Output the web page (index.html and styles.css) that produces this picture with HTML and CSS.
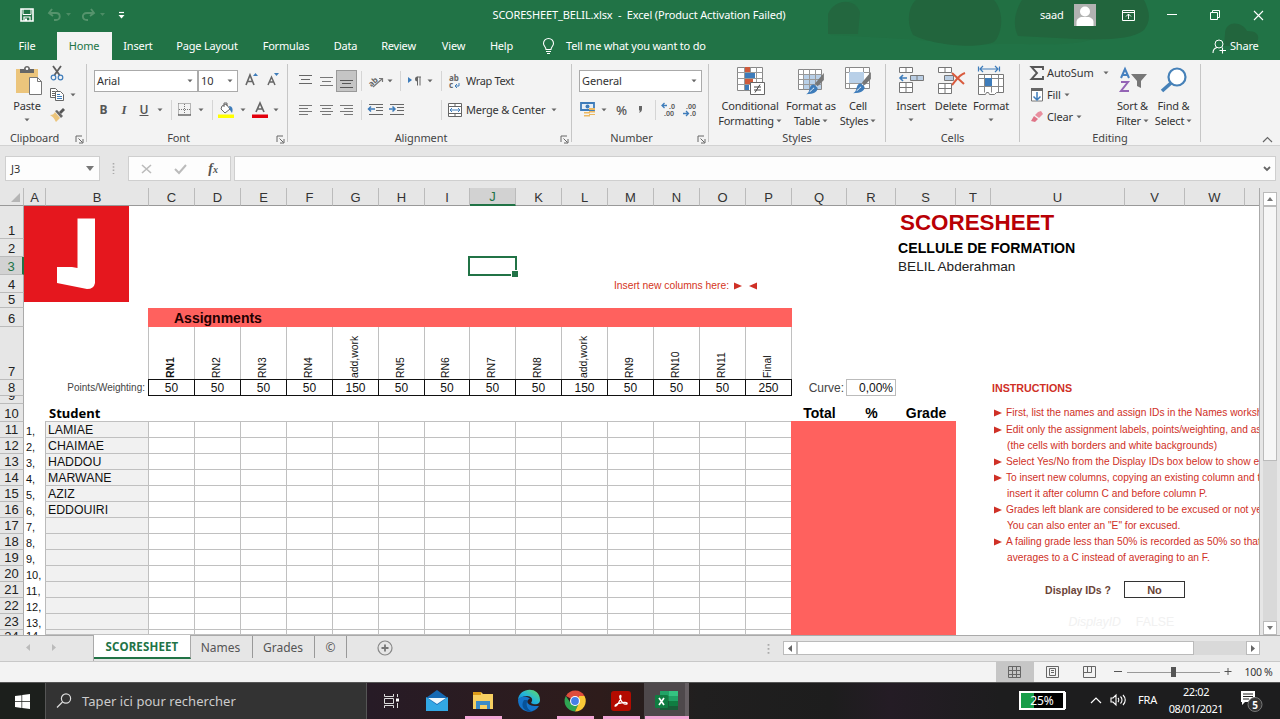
FILE: index.html
```html
<!DOCTYPE html>
<html lang="en">
<head>
<meta charset="utf-8">
<title>SCORESHEET_BELIL.xlsx - Excel</title>
<link rel="stylesheet" href="styles.css">
</head>
<body>
<svg class="defs" width="0" height="0">
  <symbol id="caret" viewBox="0 0 6 4"><path d="M.5 .5h5L3 3.3z" fill="#666"/></symbol>
  <symbol id="launch" viewBox="0 0 9 9"><path d="M1 7V1h6M3.500 3.500l4 4M8 4v4H4" fill="none" stroke="#666"/></symbol>
  <symbol id="brush" viewBox="0 0 22 26"><path d="M21 0v8l-7 7-3-3z" fill="#777"/><path d="M10 13l4 4c0 4-4 7-13 7 4-2 3-5 5-9 1-2 3-2 4-2z" fill="#3e7cba"/><path d="M5 21c3-1 3-4 5-4" stroke="#fff" fill="none"/></symbol>
</svg>
<div class="app">
  <header class="titlebar">
    <svg class="cloud" width="460" height="60" viewBox="0 0 460 60"><path d="M10 35C2 15 18 2 36 0h250c12 22 0 38-24 42-36 5-60 0-108 3-20-3-80-7-144-10z" fill="#217043"/><path d="M93 35C85 20 90 5 96 0h78c12 14 7 36 0 42-20 8-64 2-81-7zM198 36c-7-14-1-28 4-36h122c8 16 5 23 0 30-18 15-76 8-126 6zM405 34c0-14 17-13 22-3 15 0 12 9 8 15h-31z" fill="#22653d"/><path d="M8 14C15-2 35-2 40 12L38 34H8z" fill="#23673f"/></svg>
    <div class="quick">
      <svg width="14" height="14" viewBox="0 0 14 14"><path d="M1 1h12v12H1z" fill="none" stroke="#fff" stroke-width="1.600"/><path d="M3 1v5.500h8V1" fill="none" stroke="#fff" stroke-width="1"/><path d="M4 13V9h6v4" fill="none" stroke="#fff" stroke-width="1.200"/><path d="M5 10.500h2V13H5z" fill="#fff"/></svg>
      <svg width="26" height="14" viewBox="0 0 26 14"><path d="M5 1L2 5l4 3M2 5h7c5 0 5 7 0 7H7" fill="none" stroke="#55936c" stroke-width="1.900"/><path d="M19 5h5l-2.500 3z" fill="#4b8c64"/></svg>
      <svg width="26" height="14" viewBox="0 0 26 14"><path d="M10 1l3 4-4 3M13 5H6C0 5 1 12 6 12h1" fill="none" stroke="#55936c" stroke-width="1.900"/><path d="M19 5h5l-2.500 3z" fill="#4b8c64"/></svg>
      <svg width="7" height="8" viewBox="0 0 7 8"><path d="M1 1.500h5" stroke="#fff" stroke-width="1.200"/><path d="M.5 4h6l-3 3.500z" fill="#fff"/></svg>
    </div>
    <div class="doc-title">SCORESHEET_BELIL.xlsx&nbsp; -&nbsp; Excel (Product Activation Failed)</div>
    <div class="account">
      <span class="user">saad</span>
      <svg width="22" height="22" viewBox="0 0 22 22"><path d="M0 0h22v22H0z" fill="#b1b2b1"/><circle cx="11" cy="7.500" r="5" fill="#fff"/><path d="M2.500 22v-4c0-3 3-5 6-5h5c3 0 6 2 6 5v4z" fill="#fff"/></svg>
      <svg width="13" height="11" viewBox="0 0 13 11"><path d="M.5 .5h12v10H.5zM.5 2.500h12M6.500 9V4M4 6.500L6.500 4 9 6.500" fill="none" stroke="#fff"/></svg>
      <svg width="10" height="11" viewBox="0 0 10 11"><path d="M0 4.500h10" stroke="#fff"/></svg>
      <svg width="10" height="10" viewBox="0 0 10 10"><path d="M.5 2.500h7v7h-7zM2.500 2V.5h7v7H8" fill="none" stroke="#fff"/></svg>
      <svg width="11" height="11" viewBox="0 0 11 11"><path d="M1 1l9 9M10 1l-9 9" stroke="#fff" stroke-width="1.100"/></svg>
    </div>
  </header>
  <nav class="tabs">
    <span>File</span><span class="active">Home</span><span>Insert</span><span>Page Layout</span><span>Formulas</span><span>Data</span><span>Review</span><span>View</span><span>Help</span>
    <svg width="13" height="17" viewBox="0 0 13 17"><path d="M4 11.500C4 9 1.500 8 1.500 5.500a5 5 0 0 1 10 0C11.500 8 9 9 9 11.500zM4 13.500h5M5 15.500h3" fill="none" stroke="#fff" stroke-width="1.100"/></svg>
    <span class="tell">Tell me what you want to do</span>
    <div class="share"><svg width="14" height="15" viewBox="0 0 14 15"><circle cx="7" cy="5" r="4" fill="none" stroke="#fff"/><path d="M1 14c0-3 2-5 4-5.500M7.500 11.500H14M10.500 8.500v6" fill="none" stroke="#fff" stroke-width="1.100"/></svg><span>Share</span></div>
  </nav>
  <section class="ribbon">
    <div class="group clipboard">
      <div class="body">
        <div class="big paste">
          <svg width="28" height="30" viewBox="0 0 28 30"><path d="M1 3h22v24H1z" fill="#ecc57c"/><path d="M5 3h4c0-4 6-4 6 0h4v4H5z" fill="#666"/><circle cx="12" cy="2.800" r="1.300" fill="#fff"/><path d="M14.500 11.500h8l4 4v13h-12z" fill="#fff" stroke="#777"/><path d="M22.500 11.500v4h4" fill="none" stroke="#777"/></svg>
          <b>Paste</b><svg class="c"><use href="#caret"/></svg>
        </div>
        <div class="clips">
          <svg width="14" height="15" viewBox="0 0 14 15"><path d="M3 0l6.500 9M11 0L4.500 9" stroke="#5c5c5c" stroke-width="1.800"/><circle cx="3.500" cy="11.500" r="2.300" fill="none" stroke="#3e7cba" stroke-width="1.200"/><circle cx="10.500" cy="11.500" r="2.300" fill="none" stroke="#3e7cba" stroke-width="1.200"/></svg>
          <div class="pair"><svg width="14" height="13" viewBox="0 0 14 13"><path d="M.5 .5h5l2 2v7h-7zM2 3.500h3M2 5.500h3M2 7.500h3" fill="#fff" stroke="#666"/><path d="M5.500 3.500h5l3 3v6h-8z" fill="#fff" stroke="#666"/><path d="M7 6.500h3M7 8.500h5M7 10.500h5" stroke="#3e7cba"/></svg><svg class="c"><use href="#caret"/></svg></div>
          <svg width="15" height="14" viewBox="0 0 15 14"><path d="M13 0l2 2-4 4-2-2z" fill="#555"/><path d="M5 3l2-1 6 6-2 2z" fill="#666"/><path d="M5 4l5 6-4 4C4 10 3 9 0 7c3 0 4-1 5-3z" fill="#ecc57c"/></svg>
        </div>
      </div>
      <div class="label"><span>Clipboard</span><svg><use href="#launch"/></svg></div>
    </div>
    <div class="group font">
      <div class="body">
        <div class="row combos"><div class="combo"><span>Arial</span><svg class="c"><use href="#caret"/></svg></div><div class="combo"><span>10</span><svg class="c"><use href="#caret"/></svg></div>
          <svg class="grow" width="13" height="13" viewBox="0 0 13 13"><path d="M1 12L5 2l4 10M2.500 8.500h5" fill="none" stroke="#666" stroke-width="1.600"/><path d="M8 3l2.500-3L13 3z" fill="#3e7cba"/></svg>
          <svg class="shrink" width="13" height="13" viewBox="0 0 13 13"><path d="M1 12l3.500-8L8 12M2.500 9h4.500" fill="none" stroke="#666" stroke-width="1.500"/><path d="M7 0h5L9.500 3z" fill="#3e7cba"/></svg></div>
        <div class="row format">
          <b class="bold">B</b><i class="ital">I</i><u class="under">U</u><svg class="c"><use href="#caret"/></svg><hr>
          <svg width="13" height="13" viewBox="0 0 13 13"><path d="M.5 .5h12v11M.5 .5v11M6.500 1v10M1 6.500h11" fill="none" stroke="#777" stroke-dasharray="1 1"/><path d="M0 12h13" stroke="#555" stroke-width="1.300"/></svg><svg class="c"><use href="#caret"/></svg><hr>
          <svg width="16" height="16" viewBox="0 0 16 16"><path d="M4 4l4-2 4 5-5 4-4-4zM6 5V1h3v3" fill="#fff" stroke="#666"/><path d="M11 4c4 0 4 4 3 7l-2-3z" fill="#3e7cba"/><path d="M0 12.500h16V16H0z" fill="#ffff00"/></svg><svg class="c"><use href="#caret"/></svg>
          <svg width="16" height="16" viewBox="0 0 16 16"><path d="M4 10L8 1l4 9M5.500 7h5" fill="none" stroke="#666" stroke-width="1.700"/><path d="M0 12.500h16V16H0z" fill="#e3000b"/></svg><svg class="c"><use href="#caret"/></svg>
        </div>
      </div>
      <div class="label"><span>Font</span><svg><use href="#launch"/></svg></div>
    </div>
    <div class="group align">
      <div class="body">
        <div class="row align-a">
          <svg width="13" height="13" viewBox="0 0 13 13"><path d="M0 .5h13M2 4.500h9M0 8.500h13" stroke="#666"/></svg>
          <svg width="13" height="13" viewBox="0 0 13 13"><path d="M0 2.500h13M2 6.500h9M0 10.500h13" stroke="#777"/></svg>
          <span class="pressed"><svg width="13" height="13" viewBox="0 0 13 13"><path d="M0 5.500h13M2 8.500h9M0 12.500h13" stroke="#555"/></svg></span><hr>
          <svg width="16" height="14" viewBox="0 0 16 14"><g transform="rotate(-42 7 7)"><text x="0" y="9" class="glyph">ab</text></g><path d="M5 13l9-8M11 4.500h3.500V8" fill="none" stroke="#777" stroke-width="1.200"/></svg><svg class="c"><use href="#caret"/></svg><hr>
          <svg width="14" height="10" viewBox="0 0 14 10"><path d="M0 1l4 3-4 3z" fill="#3e7cba"/><path d="M9 1H13M9.500 1v8.500M12 1v8.500" stroke="#666" fill="none"/><path d="M9.500 .5a2.500 2.500 0 0 0 0 5z" fill="#666"/></svg><svg class="c"><use href="#caret"/></svg><hr>
          <svg width="12" height="15" viewBox="0 0 12 15"><text x="0" y="7" class="glyph">ab</text><text x="0" y="14" class="glyph">c</text><path d="M10 9v3H6M8 10l-2 2 2 2" fill="none" stroke="#3e7cba"/></svg><span class="txt wrap">Wrap Text</span>
        </div>
        <div class="row align-b">
          <svg width="13" height="11" viewBox="0 0 13 11"><path d="M0 1.500h13M0 4.500h9M0 7.500h13M0 10.500h9" stroke="#777"/></svg>
          <svg width="13" height="11" viewBox="0 0 13 11"><path d="M0 1.500h13M2 4.500h9M0 7.500h13M2 10.500h9" stroke="#777"/></svg>
          <svg width="13" height="11" viewBox="0 0 13 11"><path d="M0 1.500h13M4 4.500h9M0 7.500h13M4 10.500h9" stroke="#777"/></svg><hr>
          <svg width="15" height="12" viewBox="0 0 15 12"><path d="M1 .5h14M8 3.500h7M8 6.500h7M1 10.500h14" stroke="#666"/><path d="M0 5h7M3 2.500L.5 5 3 7.500" fill="none" stroke="#3e7cba" stroke-width="1.500"/></svg>
          <svg width="15" height="12" viewBox="0 0 15 12"><path d="M1 .5h14M8 3.500h7M8 6.500h7M1 10.500h14" stroke="#666"/><path d="M0 5h6M3.500 2.500L6 5 3.500 7.500" fill="none" stroke="#3e7cba" stroke-width="1.500"/></svg><i></i><hr>
          <svg width="14" height="14" viewBox="0 0 14 14"><path d="M.5 .5h13v13H.5zM.5 3.500h13M.5 10.500h13M7 .5v3M7 10.500v3" fill="#fff" stroke="#666"/><path d="M2 7h10M4 5L2 7l2 2M10 5l2 2-2 2" fill="none" stroke="#3e7cba"/></svg><span class="txt merge">Merge &amp; Center</span><svg class="c"><use href="#caret"/></svg>
        </div>
      </div>
      <div class="label"><span>Alignment</span><svg><use href="#launch"/></svg></div>
    </div>
    <div class="group number">
      <div class="body">
        <div class="row"><div class="combo"><span>General</span><svg class="c"><use href="#caret"/></svg></div></div>
        <div class="row number-b">
          <svg width="16" height="15" viewBox="0 0 16 15"><path d="M1 1h13v7H1z" fill="#e7eff7" stroke="#3e7cba" stroke-width="1.800"/><circle cx="7.500" cy="4.500" r="2" fill="#3e7cba"/><path d="M9 6h6v2H9zM9 9h6v1.500H9zM4 10h6v1.500H4zM4 13h6v1.500H4zM9 12h6v1H9z" fill="#ecb962"/></svg><svg class="c"><use href="#caret"/></svg>
          <b class="pct">%</b><svg width="5" height="8" viewBox="0 0 5 8"><path d="M1 0h3v3c0 2-1 3-3 4 1-2 1-2 0-3z" fill="#666"/></svg><hr>
          <svg width="15" height="15" viewBox="0 0 15 15"><path d="M0 3.500h5M2.500 1L0 3.500 2.500 6" fill="none" stroke="#3e7cba" stroke-width="1.300"/><text x="7" y="7" class="num">.0</text><text x="2" y="14" class="num">.00</text></svg>
          <svg width="15" height="15" viewBox="0 0 15 15"><path d="M0 11.500h5M3 9l2.500 2.500L3 14" fill="none" stroke="#3e7cba" stroke-width="1.300"/><text x="3" y="7" class="num">.00</text><text x="7" y="14" class="num">.0</text></svg>
        </div>
      </div>
      <div class="label"><span>Number</span><svg><use href="#launch"/></svg></div>
    </div>
    <div class="group styles">
      <div class="body">
        <div class="big"><svg width="30" height="30" viewBox="0 0 30 30"><path d="M2.500 1.500h25v23h-25z" fill="#fff" stroke="#888"/><path d="M10 1h5v5h-5zM10 13h8v5h-8z" fill="#cf5b3c"/><path d="M10 7h10v5H10zM10 19h4v5h-4z" fill="#3e7cba"/><path d="M2.500 6.500h25M2.500 12.500h25M2.500 18.500h25M9.500 1.500v23M15.500 1.500v5M21.500 1.500v23" stroke="#999" fill="none"/><path d="M15.500 16.500h14v12h-14z" fill="#fff" stroke="#666"/><path d="M19 21h7M19 24h7M25 18.500l-5 8" stroke="#444"/></svg><b>Conditional</b><b>Formatting<svg class="c"><use href="#caret"/></svg></b></div>
        <div class="big"><svg width="30" height="30" viewBox="0 0 30 30"><path d="M2.500 3.500h23v20h-23z" fill="#fff" stroke="#888"/><path d="M8 9h17v14H8z" fill="#b9d0e8"/><path d="M2.500 8.500h23M2.500 13.500h23M2.500 18.500h23M7.500 3.500v20M13.500 3.500v20M19.500 3.500v20" stroke="#999"/><use href="#brush" x="8" y="7" width="22" height="23"/></svg><b>Format as</b><b>Table<svg class="c"><use href="#caret"/></svg></b></div>
        <div class="big"><svg width="30" height="30" viewBox="0 0 30 30"><path d="M2.500 1.500h24v21h-24z" fill="#fff" stroke="#888"/><path d="M2.500 6.500h24M2.500 17.500h24M6.500 1.500v21M20.500 1.500v21" stroke="#999"/><path d="M6 6h15v11H6z" fill="#b9d0e8"/><use href="#brush" x="8" y="6" width="22" height="23"/></svg><b>Cell</b><b>Styles<svg class="c"><use href="#caret"/></svg></b></div>
      </div>
      <div class="label"><span>Styles</span></div>
    </div>
    <div class="group cells">
      <div class="body">
        <div class="big"><svg width="26" height="30" viewBox="0 0 26 30"><path d="M1.500 1.500h13v5h-13zM8 1.500v5M1.500 16.500h13v10h-13zM8 16.500v10M1.500 21.500h13" fill="#fff" stroke="#777"/><path d="M12.500 9.500h13v5h-13z" fill="#b9cde3" stroke="#777"/><path d="M19 9.500v5" stroke="#777"/><path d="M2 12h7M5 9l-3 3 3 3" fill="none" stroke="#3e7cba" stroke-width="1.600"/></svg><b>Insert</b><svg class="c"><use href="#caret"/></svg></div>
        <div class="big"><svg width="28" height="30" viewBox="0 0 28 30"><path d="M1.500 1.500h13v5h-13zM8 1.500v5M1.500 17.500h13v10h-13zM8 17.500v10M1.500 22.500h13" fill="#fff" stroke="#777"/><path d="M7.500 9.500h9v5h-9z" fill="#b9cde3" stroke="#777"/><path d="M15 7l12 11M28 7c-6 2-8 6-13 12" fill="none" stroke="#d95a3d" stroke-width="2"/></svg><b>Delete</b><svg class="c"><use href="#caret"/></svg></div>
        <div class="big"><svg width="28" height="30" viewBox="0 0 28 30"><path d="M1.500 .5v5M22.500 .5v5M3 3h18M6 0L3 3l3 3M18 0l3 3-3 3" fill="none" stroke="#3e7cba" stroke-width="1.200"/><path d="M1.500 8.500h25v18h-7l-2 2h-5l-1-2h-2l-1 2h-7z" fill="#fff" stroke="#777"/><path d="M1.500 12.500h25M1.500 20.500h25M7.500 3v0M7.500 8.500v18M14.500 8.500v18M21.500 8.500v18" stroke="#888"/><path d="M8 12h7v8H8z" fill="#3e7cba"/></svg><b>Format</b><svg class="c"><use href="#caret"/></svg></div>
      </div>
      <div class="label"><span>Cells</span></div>
    </div>
    <div class="group editing">
      <div class="body">
        <div class="list">
          <div><svg width="14" height="14" viewBox="0 0 14 14"><path d="M13 4V1H1.500L7 7l-5.500 6H13v-3" fill="none" stroke="#555" stroke-width="1.900"/></svg><span class="autosum">AutoSum</span><svg class="c far"><use href="#caret"/></svg></div>
          <div><svg width="14" height="14" viewBox="0 0 14 14"><path d="M1.500 1v12h11V1" fill="#fff" stroke="#777"/><path d="M1 0h12v3H1z" fill="#666"/><path d="M7 4v8M3.500 8.500L7 12l3.500-3.500" fill="none" stroke="#3e7cba" stroke-width="1.500"/></svg><span>Fill</span><svg class="c"><use href="#caret"/></svg></div>
          <div><svg width="14" height="14" viewBox="0 0 14 14"><path d="M8 2l3-1 2 3-4 4-4-3z" fill="#e88f9f"/><path d="M4 6l4 3-3 3-4-1z" fill="#df7487"/></svg><span>Clear</span><svg class="c"><use href="#caret"/></svg></div>
        </div>
        <div class="big"><svg width="28" height="30" viewBox="0 0 28 30"><path d="M2 12L6 3l4 9M3.500 9h5" fill="none" stroke="#4681c0" stroke-width="2"/><path d="M2 16h7L2 25h8" fill="none" stroke="#9464b5" stroke-width="2"/><path d="M12 8h16l-6 7v7l-4-2v-5z" fill="#777"/></svg><b>Sort &amp;</b><b>Filter<svg class="c"><use href="#caret"/></svg></b></div>
        <div class="big"><svg width="28" height="30" viewBox="0 0 28 30"><circle cx="17" cy="11" r="8.500" fill="#fff" stroke="#4681b8" stroke-width="2.200"/><path d="M11 17l-9 8" stroke="#4681b8" stroke-width="3.600"/></svg><b>Find &amp;</b><b>Select<svg class="c"><use href="#caret"/></svg></b></div>
      </div>
      <div class="label"><span>Editing</span></div>
    </div>
    <svg class="collapse" width="11" height="7" viewBox="0 0 11 7"><path d="M1 6l4.500-4.500L10 6" fill="none" stroke="#666" stroke-width="1.200"/></svg>
  </section>
  <section class="formula">
    <div class="namebox"><span>J3</span><svg width="8" height="5" viewBox="0 0 8 5"><path d="M0 0h8L4 5z" fill="#777"/></svg></div>
    <svg class="dots" width="3" height="11" viewBox="0 0 3 11"><path d="M1.500 0v11" stroke="#aaa" stroke-width="1.600" stroke-dasharray="1.500 1.800"/></svg>
    <div class="fx"><svg width="11" height="10" viewBox="0 0 11 10"><path d="M1 1l9 8M10 1L1 9" stroke="#bbb" stroke-width="1.600"/></svg><svg width="13" height="10" viewBox="0 0 13 10"><path d="M1 5l4 4 7-8" fill="none" stroke="#bbb" stroke-width="2"/></svg><i>f<small>x</small></i></div>
    <div class="entry"><svg width="8" height="6" viewBox="0 0 8 6"><path d="M1 1l3 3 3-3" fill="none" stroke="#666" stroke-width="1.800"/></svg></div>
  </section>
  <main class="work">
    <div class="sheet" id="sheet"></div>
    <div class="vscroll">
      <div class="arrow"><svg width="6" height="4" viewBox="0 0 6 4"><path d="M0 4h6L3 0z" fill="#777"/></svg></div><div class="thumb"></div><div class="track"></div>
      <div class="arrow"><svg width="6" height="4" viewBox="0 0 6 4"><path d="M0 0h6L3 4z" fill="#777"/></svg></div>
    </div>
  </main>
  <section class="sheet-tabs">
    <div class="navs"><svg width="4" height="7" viewBox="0 0 4 7"><path d="M4 0v7L0 3.500z" fill="#bbb"/></svg><svg width="4" height="7" viewBox="0 0 4 7"><path d="M0 0v7l4-3.500z" fill="#bbb"/></svg></div>
    <span class="on">SCORESHEET</span><span class="names">Names</span><span class="grades">Grades</span><span class="copy">©</span>
    <svg class="add" width="16" height="16" viewBox="0 0 16 16"><circle cx="8" cy="8" r="7" fill="none" stroke="#888" stroke-width="1.200"/><path d="M4.500 8h7M8 4.500v7" stroke="#777" stroke-width="1.800"/></svg>
    <svg class="grip" width="3" height="11" viewBox="0 0 3 11"><path d="M1.500 1v10" stroke="#aaa" stroke-width="1.800" stroke-dasharray="1.800 2.200"/></svg>
    <div class="hscroll"><div class="arrow"><svg width="4" height="7" viewBox="0 0 4 7"><path d="M4 0v7L0 3.500z" fill="#666"/></svg></div><div class="hthumb"></div><div class="htrack"></div><div class="arrow"><svg width="4" height="7" viewBox="0 0 4 7"><path d="M0 0v7l4-3.500z" fill="#666"/></svg></div></div>
  </section>
  <section class="status">
    <div class="view cur"><svg width="13" height="12" viewBox="0 0 13 12"><path d="M.5 .5h12v11H.5zM.5 4.500h12M.5 8.500h12M4.500 .5v11M8.500 .5v11" fill="none" stroke="#666"/></svg></div>
    <div class="view"><svg width="13" height="12" viewBox="0 0 13 12"><path d="M.5 .5h12v11H.5zM3.500 2.500h6v7h-6zM5 4.500h3M5 6.500h3" fill="none" stroke="#666"/></svg></div>
    <div class="view"><svg width="13" height="12" viewBox="0 0 13 12"><path d="M.5 .5h12v11H.5zM4.500 .5v6M8.500 .5v6M.5 6.500h8" fill="none" stroke="#666"/></svg></div>
    <svg class="zoom" width="118" height="12" viewBox="0 0 118 12"><path d="M1 5.500h8M115 2v7M111.500 5.500h7" stroke="#555"/><path d="M14 6.500h93" stroke="#999"/><path d="M58 1h5v10h-5z" fill="#555"/></svg>
    <span class="percent">100 %</span>
  </section>
  <footer class="taskbar">
    <div class="start"><svg width="15" height="15" viewBox="0 0 15 15"><path d="M0 2l6.500-.8v6H0zM7.200 1L15 0v7.200H7.200zM0 8h6.500v6L0 13zM7.200 8H15v7l-7.800-1z" fill="#fff"/></svg></div>
    <div class="search"><svg width="16" height="16" viewBox="0 0 16 16"><circle cx="10" cy="5.500" r="4.600" fill="none" stroke="#ddd" stroke-width="1.200"/><path d="M6.500 9L1 14.500" stroke="#ddd" stroke-width="1.300"/></svg><span>Taper ici pour rechercher</span></div>
    <div class="task view-task"><svg width="16" height="14" viewBox="0 0 16 14"><path d="M1.500 0v2.500h9V0M1.500 4.500h9v5h-9zM1.500 14v-2.500h9V14M14.500 0v3M14.500 9v5" fill="none" stroke="#ddd"/><path d="M13 4.500h3v3h-3z" fill="#fff"/></svg></div>
    <div class="task"><svg width="24" height="22" viewBox="0 0 24 22"><path d="M1 8L12 0l11 8v13H1z" fill="#1569b3"/><path d="M1 7l11 8L23 7v14H1z" fill="#32a8e5"/><path d="M3 8h18l-9 6z" fill="#eef8fd"/></svg></div>
    <div class="task run"><svg width="22" height="20" viewBox="0 0 22 20"><path d="M1 1h8l2 2h10v15H1z" fill="#f7cf61"/><path d="M1 1h8v3H1z" fill="#dc9b19"/><path d="M4 10h14v8h-3v-4H8v4H4z" fill="#3b8bc7"/></svg></div>
    <div class="task"><svg width="24" height="24" viewBox="0 0 24 24"><defs><linearGradient id="eg" x1="0" y1="1" x2="1" y2="0"><stop stop-color="#0879d1"/><stop offset=".5" stop-color="#24b6d9"/><stop offset="1" stop-color="#65dc5d"/></linearGradient></defs><path d="M1 11C2-2 23-3 23 11c0 5-6 5-9 3 3-4 0-7-4-7-4 0-7 2-9 4z" fill="url(#eg)"/><path d="M1 11c3-5 10-4 12-1-4 0-5 8 9 7-6 10-21 6-21-6z" fill="#1473c9"/><path d="M7 11c-4 6 0 12 9 12-6-2-8-8-5-12z" fill="#075299"/></svg></div>
    <div class="task run"><svg width="22" height="22" viewBox="0 0 22 22"><path d="M2 6A10.500 10.500 0 0 1 20.500 6L11 11z" fill="#df4d3c"/><path d="M1.800 6A10.500 10.500 0 0 0 11 21.500l4-8-8 0z" fill="#2fa552"/><path d="M20.500 6A10.500 10.500 0 0 1 11 21.500L15 13l0-7z" fill="#fac937"/><circle cx="11" cy="11" r="5" fill="#fff"/><circle cx="11" cy="11" r="3.900" fill="#467fe7"/></svg></div>
    <div class="task run"><svg width="20" height="20" viewBox="0 0 20 20"><rect width="20" height="20" rx="3" fill="#b30b00"/><path d="M4 15c2 1 6-7 6-10 0-1-2-1-1 2 1 4 4 7 7 6 1-2-4-2-6-1-2 0-6 1-6 3z" fill="none" stroke="#fff" stroke-width="1.300"/></svg></div>
    <div class="task run excel"><svg width="24" height="20" viewBox="0 0 24 20"><path d="M5 0h18v19H5z" fill="#20854c"/><path d="M14 0h9v5h-9z" fill="#34c481"/><path d="M5 0h9v5H5z" fill="#21a366"/><path d="M14 5h9v5h-9z" fill="#21a366"/><path d="M5 10h18v9H5z" fill="#185c37"/><path d="M14 10h9v5h-9z" fill="#107c41"/><rect y="4" width="13" height="13" rx="1" fill="#107c41"/><path d="M4 7l5 7M9 7l-5 7" stroke="#fff" stroke-width="1.700"/></svg></div>
    <div class="battery"><span>25%</span></div>
    <div class="tray"><svg width="12" height="7" viewBox="0 0 12 7"><path d="M1 6l5-5 5 5" fill="none" stroke="#fff" stroke-width="1.200"/></svg><svg width="16" height="12" viewBox="0 0 16 12"><path d="M1 4h2l3-3v10L3 8H1zM8 4c1 1 1 3 0 4M10.500 2.500c2 2 2 5 0 7M13 1c3 3 3 7 0 10" fill="none" stroke="#fff" stroke-width="1.100"/></svg><span class="lang">FRA</span></div>
    <div class="clock"><span>22:02</span><span>08/01/2021</span></div>
    <svg class="notes" width="24" height="24" viewBox="0 0 24 24"><path d="M1 1h14v11H5l-3 3v-3H1z" fill="#fff"/><path d="M3 4h10M3 6.500h10M3 9h6" stroke="#222"/><circle cx="15" cy="14.500" r="7" fill="#333" stroke="#777"/><text x="12.200" y="18.500" class="badge">5</text></svg>
  </footer>
</div>
<script src="sheet.js"></script>
</body>
</html>
```
FILE: styles.css
```css
* { box-sizing: border-box; }
body { margin: 0; overflow: hidden; font: 11px/14px "Noto Sans", sans-serif; color: #333; }
svg { display: block; flex: none; overflow: visible; }
.defs { position: absolute; }
.app { width: 1280px; height: 719px; display: flex; flex-direction: column; overflow: hidden; background: linear-gradient(#217346 60px, #e6e6e6 60px); }
.app > * { flex: none; }
.c { width: 6px; height: 4px; }

.titlebar { height: 32px; color: #fff; display: flex; align-items: center; position: relative; }
.titlebar > div { position: relative; top: -1px; }
.cloud { position: absolute; right: 0; top: 0; z-index: 0; }
.quick { width: 310px; padding-left: 20px; display: flex; align-items: center; gap: 8px; }
.quick svg:nth-child(2) { margin-left: 5px; }
.quick svg:nth-child(4) { margin-left: 3px; }
.doc-title { width: 658px; text-align: center; white-space: pre; letter-spacing: -.14px; }
.account { flex: 1; height: 30px; display: flex; align-items: center; padding-left: 72px; }
.user { width: 34px; letter-spacing: -.2px; }
.account svg:nth-of-type(2) { margin-left: 26px; }
.account svg:nth-of-type(3) { margin-left: 32px; }
.account svg:nth-of-type(4) { margin-left: 33px; }
.account svg:nth-of-type(5) { margin-left: 33px; }

.tabs { height: 28px; color: #fff; display: grid; grid-template-columns: 57px 54px 54px 84px 74px 45px 61px 49px 47px 38px 1fr 68px; align-items: center; justify-items: center; position: relative; letter-spacing: -.2px; }
.tabs .active { background: #f3f3f3; color: #217346; height: 28px; line-height: 27px; width: 55px; text-align: center; }
.tabs > span:first-child { margin-right: 3px; }
.tabs > svg { margin-left: 8px; }
.tabs .tell { justify-self: start; margin-left: 3px; }
.share { display: flex; align-items: center; gap: 4px; justify-self: start; }

.ribbon { height: 86px; background: #f3f3f3; display: flex; padding-top: 4px; position: relative; border-bottom: 1px solid #d2d2d2; color: #333; }
.group { height: 78px; border-right: 1px solid #c6c6c6; display: flex; flex-direction: column; }
.body { height: 66px; flex: none; }
.label { height: 16px; flex: none; display: flex; align-items: center; justify-content: center; position: relative; letter-spacing: -.1px; color: #444; }
.label svg { position: absolute; right: 2px; top: 5px; width: 9px; height: 9px; }
.clipboard { width: 87px; } .clipboard .label { padding-right: 17px; }
.font { width: 201px; } .font .label { padding-right: 17px; }
.align { width: 284px; } .align .label { padding-right: 17px; }
.number { width: 137px; } .number .label { padding-right: 17px; }
.styles { width: 177px; } .cells { width: 134px; } .editing { width: 181px; }
.styles .body, .cells .body, .editing .body, .clipboard .body { display: flex; }
.styles .body { padding-left: 6px; } .cells .body { padding-left: 5px; } .editing .body { padding-left: 10px; }
.big { display: flex; flex-direction: column; align-items: center; padding-top: 2px; letter-spacing: -.2px; }
.big b { font-weight: 400; white-space: nowrap; display: flex; align-items: center; gap: 2px; height: 15px; }
.big > svg:first-child { margin-bottom: 2px; }
.big > .c { margin-top: 5px; }
.paste { width: 54px; }
.paste > svg:first-child { margin-left: 3px; }
.clips { padding: 2px 0 0; margin-left: -4px; display: flex; flex-direction: column; gap: 7px; }
.pair { display: flex; align-items: center; gap: 6px; }
.styles .big:nth-child(1) { width: 70px; } .styles .big:nth-child(2) { width: 52px; } .styles .big:nth-child(3) { width: 42px; }
.cells .big { width: 40px; }
.list { width: 82px; display: flex; flex-direction: column; margin-top: -2px; }
.list > div { display: flex; align-items: center; height: 22px; gap: 3px; letter-spacing: -.15px; }
.list .far { margin-left: 6px; }
.editing .big { width: 41px; }
.row { display: flex; align-items: center; height: 21px; }
.font .body, .align .body, .number .body { display: flex; flex-direction: column; gap: 8px; padding: 6px 0 0 7px; }
.combo { height: 22px; background: #fff; border: 1px solid #aaa; display: flex; align-items: center; justify-content: space-between; padding: 0 4px 0 2px; width: 104px; letter-spacing: -.1px; }
.combo + .combo { width: 40px; }
.number .combo { width: 123px; }
.grow { margin-left: 7px; margin-bottom: 2px; } .shrink { margin-left: 9px; margin-bottom: 2px; }
hr { margin: 0; border: 0; width: 1px; height: 20px; background: #d5d5d5; }
.format, .align-a, .align-b, .number-b { display: grid; justify-items: center; }
.format { grid-template-columns: 19px 22px 18px 13px 10px 17px 16px 6px 22px 12px 21px 12px; }
.bold, .ital, .under { font-size: 12px; color: #555; }
.ital { font-family: "Liberation Serif", serif; font-weight: 700; font-size: 13px; }
.under { font-weight: 600; }
.align-a { grid-template-columns: 21px 20px 21px 9px 19px 9px 12px 18px 12px 11px 16px 1fr; }
.align-b { grid-template-columns: 21px 20px 21px 9px 19px 22px 29px 11px 16px 84px 14px; }
.pressed { width: 21px; height: 22px; background: #c5c5c5; border: 1px solid #999; display: flex; align-items: center; justify-content: center; }
.txt { justify-self: start; margin-left: 3px; white-space: nowrap; letter-spacing: -.2px; }
.wrap { letter-spacing: -.35px; }
.number-b { grid-template-columns: 18px 14px 18px 22px 8px 20px 22px; }
.pct { font-size: 13px; font-weight: 500; color: #555; margin-left: 3px; }
.glyph { font: 700 8px "Noto Sans", sans-serif; fill: #666; }
.num { font: 600 7px "Noto Sans", sans-serif; fill: #555; }
.badge { font: 700 10px "Noto Sans", sans-serif; fill: #fff; }
.collapse { position: absolute; left: 1262px; top: 76px; }

.formula { height: 42px; display: flex; padding: 10px 0 0 5px; }
.formula > div { height: 25px; background: #fdfdfd; border: 1px solid #cfcfcf; display: flex; align-items: center; }
.namebox { width: 95px; padding: 0 5px; justify-content: space-between; }
.dots { margin: 7px 13px 0 12px; }
.fx { width: 103px; padding: 0 12px 0 12px; justify-content: space-between; }
.fx i { font: italic 700 14px "Liberation Serif", serif; color: #555; }
.fx small { font-size: 10px; }
.entry { width: 1042px; margin-left: 3px; justify-content: flex-end; padding-right: 4px; }

.work { height: 447px; display: flex; gap: 3px; }
.sheet { width: 1260px; height: 447px; overflow: hidden; display: grid; background: #fff; border-right: 1px solid #aaa;
  grid-template-columns: 24px 22px 103px repeat(6, 46px) 45px repeat(7, 46px) 55px 49px 60px 35px 134px 60px 60px 15px;
  grid-template-rows: 18px 33px 18px 18px 18px 15px 19px 53px 16px 8px 18px repeat(13, 16px) 5px;
  font: 12.3px/14px "Liberation Sans", Arial, sans-serif; color: #111; }
.sheet > div { min-width: 0; min-height: 0; white-space: pre; display: flex; }
.colhead { background: #e6e6e6; border-bottom: 1px solid #999; border-right: 1px solid #bbb; align-items: center; justify-content: center; font-size: 13px; color: #333; padding-top: 2px; }
.rowhead { background: #e6e6e6; border-bottom: 1px solid #bbb; border-right: 1px solid #aaa; align-items: flex-end; justify-content: center; font-size: 13px; overflow: hidden; color: #222; }
.rowhead.cut { align-items: flex-start; border-bottom: 0; }
.colhead.sel { background: #d2d2d2; border-bottom: 2px solid #217346; color: #217346; }
.rowhead.sel { background: #d2d2d2; border-right: 2px solid #217346; color: #217346; }
.corner { background: #e6e6e6; border-bottom: 1px solid #999; align-items: flex-end; justify-content: flex-end; padding: 0 3px 3px 0; border-right: 1px solid #bbb; }
.cell { border-right: 1px solid #c0c0c0; border-bottom: 1px solid #c0c0c0; }
.cell.first { border-top: 1px solid #c0c0c0; margin-top: -1px; }
.name { background: #f1f1f1; padding-left: 2px; align-items: center; border-left: 1px solid #bbb; margin-left: -1px; }
.idx { align-items: flex-end; padding: 0 0 1px 2px; font-size: 11px; line-height: 12px; overflow: hidden; }
.idx.cut { align-items: flex-start; }
.lab { border-right: 1px solid #c0c0c0; align-items: center; justify-content: center; }
.lab.lead { border-left: 1px solid #c0c0c0; margin-left: -1px; }
.lab span { writing-mode: vertical-rl; transform: rotate(180deg); height: 51px; font-size: 10.400px; line-height: 12px; padding-top: 1px; margin-right: 2px; }
.pts { border: solid #111; border-width: 1px 1px 1px 0; margin-top: -1px; align-items: center; justify-content: center; font-size: 12px; padding-top: 1px; }
.pts.lead { border-left-width: 1px; margin-left: -1px; }
.red { background: #ff615e; margin: -1px 0 0 -1px; }
.band { background: #ff615e; font-weight: 700; font-size: 14px; align-items: center; padding-left: 26px; color: #200; margin-left: -1px; }
.logo { z-index: 2; }
.title { font-weight: 700; font-size: 22.400px; color: #b90005; align-items: center; padding-left: 4px; }
.sub { font-weight: 700; font-size: 14.150px; color: #000; align-items: center; padding-left: 2px; }
.author { font-size: 13.600px; align-items: center; padding: 2px 0 0 2px; color: #222; }
.here { font-size: 10.300px; color: #d43522; align-items: center; justify-content: flex-end; gap: 5px; padding: 3px 35px 0 0; }
.here i { margin-right: -3px; }
.active-cell { border: 2px solid #217346; margin: -1px -1px -1px -2px; position: relative; }
.active-cell::after { content: ""; position: absolute; width: 6px; height: 6px; right: -3px; bottom: -3px; background: #217346; border: solid #fff; border-width: 1px 0 0 1px; }
.right { justify-content: flex-end; align-items: center; font-size: 10px; padding-right: 4px; color: #444; }
.curve { font-size: 12px; padding-right: 3px; }
.curvebox { border: 1px solid #bbb; margin: -1px 0 0 -1px; justify-content: flex-end; align-items: center; padding: 1px 2px 0 0; font-size: 12px; }
.head { font: 700 14px/18px "Liberation Sans", Arial, sans-serif; align-items: center; justify-content: center; color: #000; }
.student { font-family: "Noto Sans", sans-serif; font-size: 13px; justify-content: flex-start; padding-left: 3px; }
.ins { color: #cf3026; font-size: 10.200px; align-items: center; }
.ins svg { margin: 0 4px 0 3px; }
.ins.cont { padding-left: 16px; }
.ins.hd { font-weight: 700; padding-left: 1px; font-size: 10.700px; }
.disp { font-weight: 700; font-size: 10.500px; color: #6a4437; align-items: center; justify-content: flex-end; padding-right: 14px; }
.no { border: 1px solid #333; margin: -1px 0 0 -1px; color: #6a4437; font-weight: 700; font-size: 11px; align-items: center; justify-content: center; }
.ghost { color: #f1f1f1; align-items: center; justify-content: flex-end; padding-right: 4px; font-style: italic; font-size: 12.300px; }
.ghost.plain { font-style: normal; justify-content: center; padding: 0; }
.vscroll { width: 14px; padding-top: 4px; display: flex; flex-direction: column; }
.arrow { width: 14px; height: 14px; background: #fff; border: 1px solid #bbb; display: flex; align-items: center; justify-content: center; flex: none; }
.thumb { height: 255px; background: #f6f6f6; border: 1px solid #bbb; }
.track { flex: 1; background: #d9d9d9; }

.sheet-tabs { height: 27px; border-top: 1px solid #aaa; border-bottom: 1px solid #c8c8c8; display: flex; font-size: 12px; color: #555; }
.navs { width: 94px; border-right: 1px solid #aaa; padding: 8px 0 0 26px; display: flex; gap: 22px; }
.sheet-tabs .on { width: 97px; margin-top: -1px; height: 24px; background: #fff; color: #217346; font-weight: 700; border-bottom: 2px solid #217346; border-right: 1px solid #aaa; font-size: 11.500px; letter-spacing: .16px; }
.sheet-tabs span { text-align: center; line-height: 24px; height: 22px; }
.names, .grades, .copy { border-right: 1px solid #999; }
.names { width: 62px; padding-right: 2px; } .grades { width: 62px; padding-right: 1px; } .copy { width: 32px; }
.add { margin: 4px 0 0 30px; }
.grip { margin: 7px 0 0 374px; }
.hscroll { display: flex; margin: 5px 0 0 13px; }
.hthumb { width: 397px; height: 14px; background: #fff; border: 1px solid #bbb; }
.htrack { width: 52px; height: 14px; background: #d9d9d9; }

.status { height: 20px; background: #f3f3f3; display: flex; align-items: center; padding-left: 996px; }
.view { width: 37.500px; height: 20px; display: flex; align-items: center; justify-content: center; }
.cur { background: #c6c6c6; }
.zoom { margin-left: 4px; }
.percent { margin-left: 14px; letter-spacing: -.3px; white-space: nowrap; font-size: 10.500px; }

.taskbar { height: 37px; display: flex; background: linear-gradient(90deg, #201c20 0, #271b26 370px, #2e1c1b 600px, #201f1f 700px, #1d1d1d 830px, #241c25 890px, #1d1d1e 1000px); color: #fff; border-top: 1px solid #555; }
.start { width: 45px; background: #1c1f1c; display: flex; align-items: center; justify-content: center; }
.search { width: 322px; background: #333; border: solid #555; border-width: 0 1px; display: flex; align-items: center; gap: 10px; padding-left: 10px; color: #ccc; font-size: 13px; letter-spacing: .05px; }
.task { width: 46px; display: flex; align-items: center; justify-content: center; }
.view-task { width: 47px; }
.run { background: linear-gradient(#f2a5d5, #f2a5d5) center bottom / 37px 3px no-repeat; }
.excel { background: linear-gradient(#f2a5d5, #f2a5d5) center bottom / 44px 3px no-repeat, linear-gradient(90deg, #4e484b 41px, #655e62 41px); width: 45px; }
.battery { width: 46px; height: 19px; margin: 8px 0 0 330px; background: linear-gradient(90deg, #189d49 13px, #000 13px); border: 2px solid #fff; text-align: center; line-height: 15px; font-size: 12px; box-shadow: 2px 0 0 -1px #fff; }
.tray { display: flex; align-items: center; gap: 8px; margin: 0 0 2px 25px; }
.lang { margin-left: 4px; letter-spacing: -.2px; }
.clock { width: 64px; display: flex; flex-direction: column; align-items: center; margin-left: 7px; padding-top: 1px; line-height: 16.500px; letter-spacing: -.4px; }
.notes { margin: 7px 0 0 12px; }
```
FILE: sheet.js
```js
const sheet = document.getElementById('sheet');

// Row and column are 1-based grid lines; the header strip is row 1, column 1.
function put(cls, row, col, html = '', rows = 1, cols = 1) {
  const d = document.createElement('div');
  d.className = cls;
  d.style.gridArea = `${row} / ${col} / span ${rows} / span ${cols}`;
  d.innerHTML = html;
  sheet.appendChild(d);
  return d;
}
const tri = (left) => `<svg width="8" height="8" viewBox="0 0 8 8"><path d="${left ? 'M8 .5v7L0 4z' : 'M0 .5v7l8-3.500z'}" fill="#cf3026"/></svg>`;

put('corner', 1, 1, '<svg width="9" height="9" viewBox="0 0 9 9"><path d="M9 0v9H0z" fill="#b5b5b5"/></svg>');
[...'ABCDEFGHIJKLMNOPQRSTUVW', ''].forEach((c, i) => put('colhead' + (c === 'J' ? ' sel' : ''), 1, i + 2, c));
for (let r = 1; r <= 24; r++) put('rowhead' + (r === 3 ? ' sel' : '') + (r === 24 ? ' cut' : ''), r + 1, 1, String(r));

put('logo', 2, 2, '<svg width="105" height="96" viewBox="0 0 105 96"><path d="M0 0h105v96H0z" fill="#e5171e"/><path d="M53.500 12.500H71V77q-1 6-8 6L33 77V61h15l5.500 1z" fill="#fff"/></svg>', 1, 1);
put('active-cell', 4, 11);
put('title', 2, 20, 'SCORESHEET', 1, 4);
put('sub', 3, 20, 'CELLULE DE FORMATION', 1, 4);
put('author', 4, 20, 'BELIL Abderahman', 1, 4);
put('here', 5, 13, `<span>Insert new columns here:</span>${tri(false)}<i></i>${tri(true)}`, 1, 5);
put('band', 7, 4, 'Assignments', 1, 14);

const labels = ['RN1', 'RN2', 'RN3', 'RN4', 'add,work', 'RN5', 'RN6', 'RN7', 'RN8', 'add,work', 'RN9', 'RN10', 'RN11', 'Final'];
const points = [50, 50, 50, 50, 150, 50, 50, 50, 50, 150, 50, 50, 50, 250];
labels.forEach((t, i) => {
  const lead = i ? '' : ' lead';
  put('lab' + lead, 8, i + 4, `<span>${i ? t : `<b>${t}</b>`}</span>`);
  put('pts' + lead, 9, i + 4, points[i]);
});
put('right', 9, 2, 'Points/Weighting:', 1, 2);
put('right curve', 9, 18, 'Curve:');
put('curvebox', 9, 19, '0,00%');
put('head student', 11, 3, 'Student');
put('head', 11, 18, 'Total');
put('head', 11, 19, '%');
put('head', 11, 20, 'Grade');

const students = ['LAMIAE', 'CHAIMAE', 'HADDOU', 'MARWANE', 'AZIZ', 'EDDOUIRI'];
for (let r = 0; r < 14; r++) {
  const first = r ? '' : ' first';
  put('idx' + (r === 13 ? ' cut' : ''), r + 12, 2, `${r + 1},`);
  put('cell name' + first, r + 12, 3, students[r] || '');
  for (let c = 0; c < 14; c++) put('cell' + first, r + 12, c + 4);
}
put('red', 12, 18, '', 14, 3);

put('ins hd', 9, 22, 'INSTRUCTIONS', 1, 4);
[[11, 1, 'First, list the names and assign IDs in the Names worksheet'],
 [12, 1, 'Edit only the assignment labels, points/weighting, and assigned'],
 [13, 0, '(the cells with borders and white backgrounds)'],
 [14, 1, 'Select Yes/No from the Display IDs box below to show either'],
 [15, 1, 'To insert new columns, copying an existing column and then'],
 [16, 0, 'insert it after column C and before column P.'],
 [17, 1, 'Grades left blank are considered to be excused or not yet'],
 [18, 0, 'You can also enter an "E" for excused.'],
 [19, 1, 'A failing grade less than 50% is recorded as 50% so that'],
 [20, 0, 'averages to a C instead of averaging to an F.']
].forEach(([row, mark, t]) => put('ins' + (mark ? '' : ' cont'), row, 22, (mark ? tri(false) : '') + `<span>${t}</span>`, 1, 4));
put('disp', 22, 22, 'Display IDs ?');
put('no', 22, 23, 'No');
put('ghost', 24, 22, 'DisplayID');
put('ghost plain', 24, 23, 'FALSE');
```
